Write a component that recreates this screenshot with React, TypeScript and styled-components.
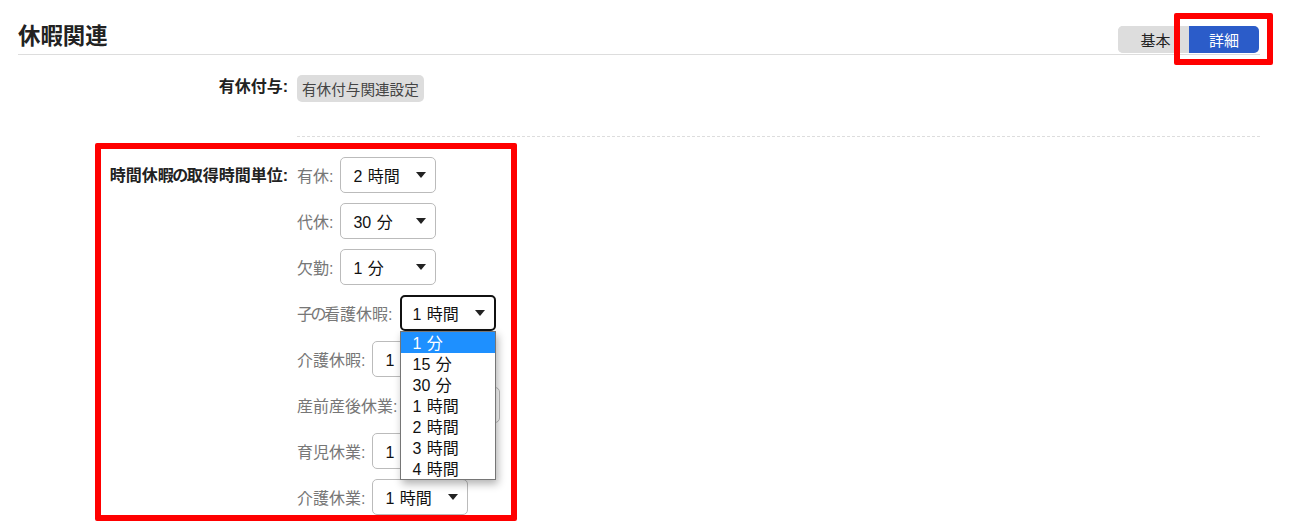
import React from 'react';
import styled, { createGlobalStyle } from 'styled-components';

const GlobalStyle = createGlobalStyle`
  html, body {
    margin: 0;
    padding: 0;
    height: 100%;
    overflow: hidden;
    background: #fff;
  }
  body {
    font-family: "Liberation Sans", "Noto Sans CJK JP", sans-serif;
    color: #222;
  }
`;

const Page = styled.div`
  position: relative;
  width: 1302px;
  height: 523px;
  padding: 26px 42px 0 18px;
  box-sizing: border-box;
  overflow: hidden;
`;

const SectionHeader = styled.header`
  display: flex;
  align-items: flex-end;
  justify-content: space-between;
  height: 28px;
  border-bottom: 1px solid #ddd;
`;

const Title = styled.h2`
  margin: 0 0 5px;
  font-size: 22.4px;
  line-height: 24px;
  font-weight: 700;
  color: #222;
`;

const Toggle = styled.div`
  display: flex;
  margin: 0 1px 1px 0;
  border-radius: 5px;
  overflow: hidden;
  background: #ddd;
`;

const ToggleButton = styled.button<{ $active?: boolean }>`
  width: ${props => (props.$active ? '70px' : '71px')};
  height: 27px;
  padding: 0 0 0 ${props => (props.$active ? '0' : '4px')};
  border: none;
  font-family: inherit;
  font-size: 15px;
  background: ${props => (props.$active ? '#2b5cc9' : '#ddd')};
  color: ${props => (props.$active ? '#fff' : '#222')};
`;

const FormRow = styled.div<{ $top?: number }>`
  display: grid;
  grid-template-columns: 270px 1fr;
  column-gap: 9px;
  margin-top: ${props => props.$top ?? 0}px;
`;

const RowLabel = styled.div<{ $lineHeight: number }>`
  font-size: 16px;
  font-weight: 700;
  line-height: ${props => props.$lineHeight}px;
  text-align: right;
  color: #222;
  white-space: nowrap;
`;

const SettingsButton = styled.button`
  height: 27px;
  padding: 0 5px;
  border: none;
  border-radius: 5px;
  background: #ddd;
  color: #444;
  font-family: inherit;
  font-size: 14.6px;
  white-space: nowrap;
`;

const DashedRule = styled.div`
  margin: 34px 0 0 279px;
  border-top: 1px dashed #ddd;
`;

const UnitList = styled.div`
  display: flex;
  flex-direction: column;
  gap: 10px;
`;

const UnitRow = styled.div`
  display: flex;
  align-items: center;
  gap: 7px;
  height: 36px;
`;

const UnitLabel = styled.span`
  font-size: 16px;
  color: #777;
  white-space: nowrap;
`;

// the kana in the reference font sits narrower than a full em
const NarrowKana = styled.span<{ $trim: number }>`
  margin: 0 ${props => -props.$trim / 2}px;
`;

const SelectWrap = styled.div`
  position: relative;
`;

const SelectBox = styled.div<{ $focused?: boolean }>`
  display: flex;
  align-items: center;
  justify-content: space-between;
  box-sizing: border-box;
  width: 96px;
  height: 36px;
  padding: 0 ${props => (props.$focused ? '9px' : '9px')} 0 ${props => (props.$focused ? '11px' : '12px')};
  border: ${props => (props.$focused ? '2px solid #111' : '1px solid #bbb')};
  border-radius: 5px;
  background: #fff;
  color: #111;
  font-size: 16px;
  word-spacing: 1px;
  white-space: nowrap;
`;

const Arrow = styled.svg`
  width: 10px;
  height: 6px;
  margin-top: -1px;
  fill: #222;
`;

const Dropdown = styled.ul`
  position: absolute;
  top: 36px;
  left: 0;
  z-index: 5;
  box-sizing: border-box;
  width: 96px;
  margin: 0;
  padding: 0;
  list-style: none;
  background: #fff;
  border: 1px solid #767676;
  box-shadow: 2px 4px 8px rgba(0, 0, 0, 0.3);
`;

const DropdownItem = styled.li<{ $selected?: boolean }>`
  height: 21px;
  padding-left: 12px;
  font-size: 16px;
  line-height: 23px;
  word-spacing: 1px;
  color: ${props => (props.$selected ? '#fff' : '#111')};
  background: ${props => (props.$selected ? '#1e90ff' : 'transparent')};
`;

const Annotation = styled.div<{ $left: number; $top: number; $width: number; $height: number }>`
  position: absolute;
  left: ${props => props.$left}px;
  top: ${props => props.$top}px;
  width: ${props => props.$width}px;
  height: ${props => props.$height}px;
  box-sizing: border-box;
  border: 6px solid #f00;
  border-radius: 2px;
  z-index: 10;
  pointer-events: none;
`;

const units = [
  { label: '有休', value: '2 時間' },
  { label: '代休', value: '30 分' },
  { label: '欠勤', value: '1 分' },
  { label: <>子<NarrowKana $trim={5}>の</NarrowKana>看護休暇</>, value: '1 時間', open: true },
  { label: '介護休暇', value: '1 時間' },
  { label: '産前産後休業', value: '1 時間' },
  { label: '育児休業', value: '1 時間' },
  { label: '介護休業', value: '1 時間' },
];

const options = ['1 分', '15 分', '30 分', '1 時間', '2 時間', '3 時間', '4 時間'];

export default function App() {
  return (
    <Page>
      <GlobalStyle />
      <SectionHeader>
        <Title>休暇関連</Title>
        <Toggle>
          <ToggleButton>基本</ToggleButton>
          <ToggleButton $active>詳細</ToggleButton>
        </Toggle>
      </SectionHeader>

      <FormRow $top={20}>
        <RowLabel $lineHeight={24}>有休付与:</RowLabel>
        <div>
          <SettingsButton>有休付与関連設定</SettingsButton>
        </div>
      </FormRow>

      <DashedRule />

      <FormRow $top={20}>
        <RowLabel $lineHeight={38}>時間休暇<NarrowKana $trim={3}>の</NarrowKana>取得時間単位:</RowLabel>
        <UnitList>
          {units.map((unit, i) => (
            <UnitRow key={i}>
              <UnitLabel>{unit.label}:</UnitLabel>
              <SelectWrap>
                <SelectBox $focused={unit.open}>
                  {unit.value}
                  <Arrow viewBox="0 0 10 6">
                    <path d="M0 0h10L5 6z" />
                  </Arrow>
                </SelectBox>
                {unit.open && (
                  <Dropdown>
                    {options.map((option, j) => (
                      <DropdownItem key={option} $selected={j === 0}>
                        {option}
                      </DropdownItem>
                    ))}
                  </Dropdown>
                )}
              </SelectWrap>
            </UnitRow>
          ))}
        </UnitList>
      </FormRow>

      <Annotation $left={1174} $top={13} $width={99} $height={52} />
      <Annotation $left={95} $top={143} $width={422} $height={378} />
    </Page>
  );
}
